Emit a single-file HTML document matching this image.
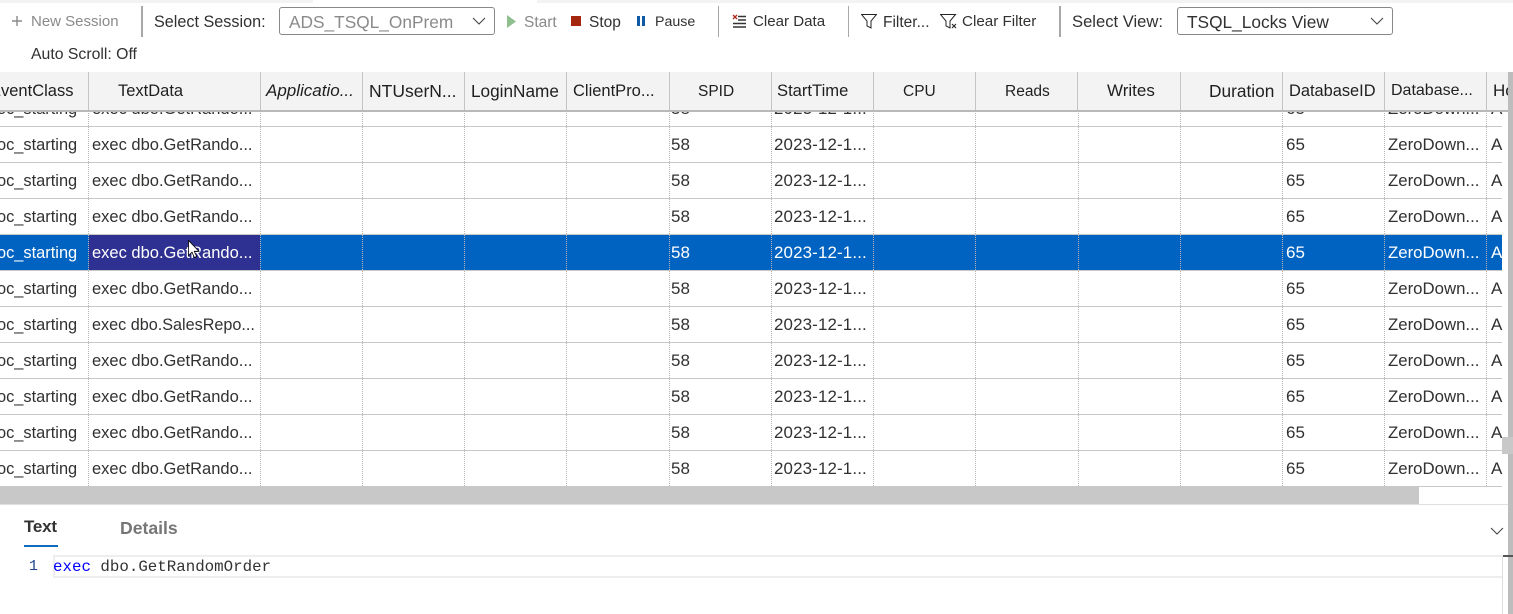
<!DOCTYPE html>
<html><head><meta charset="utf-8"><style>
html,body{margin:0;padding:0;background:#fff}
body{position:relative;width:1513px;height:614px;overflow:hidden;font-family:"Liberation Sans",sans-serif;font-size:15.5px;color:#323130}
.t,.r span,.h span{position:absolute;white-space:nowrap}
.t{line-height:20px}
.b{position:absolute;background:#a8a8a8;width:2px;top:6px;height:31px}
.g{color:#8a8a8a}
.dd{position:absolute;top:7px;height:28px;border:1px solid #8a8886;border-radius:3px;box-sizing:border-box;font-size:17.3px;line-height:28px;padding-left:9px}
.dd svg{position:absolute;right:7px;top:9px}
.h{position:absolute;left:0;top:72px;width:1508px;height:38px;background:#f3f3f3}
.h span{top:9px;line-height:20px;color:#1f1f1f;font-size:16.5px}
.h .n{top:10px;font-size:15.5px}
.hs{position:absolute;top:72px;width:1px;height:38px;background:#c4c4c4}
.cl{position:absolute;top:111px;height:375px;width:0;border-left:1px dotted #b5b5b5}
.r{position:absolute;left:0;width:1502px;height:36px;border-bottom:1px solid #c8c8c8;box-sizing:border-box}
.r span{top:8px;line-height:20px;color:#323130;font-size:16.5px}
.r .a{left:-3px;font-size:16.4px}.r .b1{left:92px;font-size:16.5px}.r .c{left:671px;font-size:17px}.r .d{left:774px;font-size:16.9px;letter-spacing:.15px}.r .e{left:1286px;font-size:17px}.r .f{left:1388px;font-size:16.8px}.r .k{left:1491px;font-size:17px}
.r .s{font-size:16.2px}
.sel{background:#0063c1;border-bottom-color:#c8c8c8}
.r.sel span{color:#fff}
.hi{position:absolute;left:89px;top:0;width:171px;height:35px;background:#2e3192}
</style></head><body>
<div style="position:absolute;left:0;top:0;width:313px;height:3px;background:#f3f3f3"></div>
<div style="position:absolute;left:537px;top:0;width:976px;height:3px;background:#f3f3f3"></div>

<svg style="position:absolute;left:11px;top:15px" width="12" height="12"><path d="M6 1v10M1 6h10" stroke="#8a8a8a" stroke-width="1.4"/></svg>
<div class="t g" style="left:31px;top:12px;font-size:15px">New Session</div>
<div class="b" style="left:141px"></div>
<div class="t" style="left:154px;top:12px;font-size:16.2px">Select Session:</div>
<div class="dd g" style="left:279px;width:216px">ADS_TSQL_OnPrem<svg width="16" height="9"><path d="M2 1l6 6 6-6" fill="none" stroke="#444" stroke-width="1.1"/></svg></div>
<svg style="position:absolute;left:507px;top:15px" width="10" height="13"><path d="M0 0l9 6.5L0 13z" fill="#8fbf8f"/></svg>
<div class="t g" style="left:524px;top:13px">Start</div>
<div style="position:absolute;left:571px;top:16px;width:10px;height:10px;background:#a4260f"></div>
<div class="t" style="left:589px;top:13px">Stop</div>
<div style="position:absolute;left:637px;top:16px;width:3px;height:10px;background:#0f5ba8"></div>
<div style="position:absolute;left:642px;top:16px;width:3px;height:10px;background:#0f5ba8"></div>
<div class="t" style="left:655px;top:12px;font-size:14.2px">Pause</div>
<div class="b" style="left:718px;width:1px"></div>
<svg style="position:absolute;left:732px;top:14px" width="15" height="15"><path d="M1 1l4 4M5 1L1 5" stroke="#b02a1a" stroke-width="1.3"/><path d="M6 2.500h8M6 6h8M1 9.500h13M1 13h13" stroke="#333" stroke-width="1.5"/></svg>
<div class="t" style="left:753px;top:12px;font-size:15.1px">Clear Data</div>
<div class="b" style="left:848px;width:1px"></div>
<svg style="position:absolute;left:861px;top:14px" width="16" height="15"><path d="M.5.500h15L10 7v7l-4-2V7z" fill="none" stroke="#222" stroke-width="1"/></svg>
<div class="t" style="left:883px;top:13px">Filter...</div>
<svg style="position:absolute;left:940px;top:14px" width="18" height="15"><path d="M.5.500h15L10 7v7l-4-2V7z" fill="none" stroke="#222" stroke-width="1"/><path d="M12 10l4 4M16 10l-4 4" stroke="#222" stroke-width="1.1"/></svg>
<div class="t" style="left:962px;top:12px;font-size:15.2px">Clear Filter</div>
<div class="b" style="left:1059px"></div>
<div class="t" style="left:1072px;top:12px;font-size:16.6px">Select View:</div>
<div class="dd" style="left:1177px;width:216px">TSQL_Locks View<svg width="16" height="9"><path d="M2 1l6 6 6-6" fill="none" stroke="#444" stroke-width="1.1"/></svg></div>
<div class="t" style="left:31px;top:45px;font-size:15.8px">Auto Scroll: Off</div>

<div class="r" style="top:91px"><span class="a">oc_starting</span><span class="b1">exec dbo.GetRando...</span><span class="c">58</span><span class="d">2023-12-1...</span><span class="e">65</span><span class="f">ZeroDown...</span><span class="k">A</span></div>
<div class="r" style="top:127px"><span class="a">oc_starting</span><span class="b1">exec dbo.GetRando...</span><span class="c">58</span><span class="d">2023-12-1...</span><span class="e">65</span><span class="f">ZeroDown...</span><span class="k">A</span></div>
<div class="r" style="top:163px"><span class="a">oc_starting</span><span class="b1">exec dbo.GetRando...</span><span class="c">58</span><span class="d">2023-12-1...</span><span class="e">65</span><span class="f">ZeroDown...</span><span class="k">A</span></div>
<div class="r" style="top:199px"><span class="a">oc_starting</span><span class="b1">exec dbo.GetRando...</span><span class="c">58</span><span class="d">2023-12-1...</span><span class="e">65</span><span class="f">ZeroDown...</span><span class="k">A</span></div>
<div class="r sel" style="top:235px"><div class="hi"></div><span class="a">oc_starting</span><span class="b1">exec dbo.GetRando...</span><span class="c">58</span><span class="d">2023-12-1...</span><span class="e">65</span><span class="f">ZeroDown...</span><span class="k">A</span></div>
<div class="r" style="top:271px"><span class="a">oc_starting</span><span class="b1">exec dbo.GetRando...</span><span class="c">58</span><span class="d">2023-12-1...</span><span class="e">65</span><span class="f">ZeroDown...</span><span class="k">A</span></div>
<div class="r" style="top:307px"><span class="a">oc_starting</span><span class="b1 s">exec dbo.SalesRepo...</span><span class="c">58</span><span class="d">2023-12-1...</span><span class="e">65</span><span class="f">ZeroDown...</span><span class="k">A</span></div>
<div class="r" style="top:343px"><span class="a">oc_starting</span><span class="b1">exec dbo.GetRando...</span><span class="c">58</span><span class="d">2023-12-1...</span><span class="e">65</span><span class="f">ZeroDown...</span><span class="k">A</span></div>
<div class="r" style="top:379px"><span class="a">oc_starting</span><span class="b1">exec dbo.GetRando...</span><span class="c">58</span><span class="d">2023-12-1...</span><span class="e">65</span><span class="f">ZeroDown...</span><span class="k">A</span></div>
<div class="r" style="top:415px"><span class="a">oc_starting</span><span class="b1">exec dbo.GetRando...</span><span class="c">58</span><span class="d">2023-12-1...</span><span class="e">65</span><span class="f">ZeroDown...</span><span class="k">A</span></div>
<div class="r" style="top:451px"><span class="a">oc_starting</span><span class="b1">exec dbo.GetRando...</span><span class="c">58</span><span class="d">2023-12-1...</span><span class="e">65</span><span class="f">ZeroDown...</span><span class="k">A</span></div>

<div class="cl" style="left:88px"></div><div class="cl" style="left:260px"></div><div class="cl" style="left:362px"></div><div class="cl" style="left:464px"></div><div class="cl" style="left:566px"></div><div class="cl" style="left:669px"></div><div class="cl" style="left:771px"></div><div class="cl" style="left:873px"></div><div class="cl" style="left:975px"></div><div class="cl" style="left:1078px"></div><div class="cl" style="left:1180px"></div><div class="cl" style="left:1282px"></div><div class="cl" style="left:1384px"></div><div class="cl" style="left:1486px"></div>

<div class="h"><span style="left:-10px">EventClass</span><span style="left:118px">TextData</span><span style="left:266px;font-style:italic;font-size:17px">Applicatio...</span><span style="left:369px;font-size:17.5px">NTUserN...</span><span style="left:471px;font-size:17.2px">LoginName</span><span style="left:573px">ClientPro...</span><span class="n" style="left:698px">SPID</span><span style="left:777px;font-size:16.6px">StartTime</span><span class="n" style="left:903px">CPU</span><span class="n" style="left:1005px">Reads</span><span style="left:1107px;font-size:17px">Writes</span><span style="left:1209px;font-size:17.3px">Duration</span><span style="left:1289px;font-size:16.4px">DatabaseID</span><span style="left:1391px;font-size:16px">Database...</span><span style="left:1493px;width:15px;overflow:hidden;font-size:17px">Host</span></div>
<div class="hs" style="left:88px"></div><div class="hs" style="left:260px"></div><div class="hs" style="left:362px"></div><div class="hs" style="left:464px"></div><div class="hs" style="left:566px"></div><div class="hs" style="left:669px"></div><div class="hs" style="left:771px"></div><div class="hs" style="left:873px"></div><div class="hs" style="left:975px"></div><div class="hs" style="left:1077px"></div><div class="hs" style="left:1180px"></div><div class="hs" style="left:1282px"></div><div class="hs" style="left:1384px"></div><div class="hs" style="left:1486px"></div>
<div style="position:absolute;left:0;top:110px;width:1508px;height:2px;background:#b8b8b8"></div>

<div style="position:absolute;left:0;top:487px;width:1419px;height:17px;background:#c8c8c8"></div>
<div style="position:absolute;left:0;top:504px;width:1508px;height:1px;background:#e0e0e0"></div>
<div style="position:absolute;left:1508px;top:72px;width:5px;height:542px;background:#bdbdbd"></div>
<div style="position:absolute;left:1502px;top:437px;width:11px;height:17px;background:#c8c8c8"></div>
<div style="position:absolute;left:1503px;top:555px;width:10px;height:2px;background:#555"></div>

<div class="t" style="left:24px;top:517px;font-weight:bold;font-size:17px;color:#333;letter-spacing:-.2px">Text</div>
<div style="position:absolute;left:24px;top:545px;width:34px;height:2px;background:#0f6cbd"></div>
<div class="t" style="left:120px;top:518px;font-weight:bold;font-size:17.6px;color:#767676">Details</div>
<svg style="position:absolute;left:1490px;top:527px" width="15" height="9"><path d="M1 1l6 6 6-6" fill="none" stroke="#444" stroke-width="1.1"/></svg>

<div style="position:absolute;left:53px;top:555px;width:1450px;height:23px;border:solid #eee;border-width:2px 0 2px 2px;box-sizing:border-box"></div>
<div style="position:absolute;left:1502px;top:557px;width:1px;height:57px;background:#ddd"></div>
<div class="t" style="left:29px;top:557px;font-family:'Liberation Mono',monospace;font-size:15px;color:#1c3f8f">1</div>
<div class="t" style="left:53px;top:557px;font-family:'Liberation Mono',monospace;font-size:15.8px"><span style="color:#0000ff">exec</span> <span style="color:#333">dbo.GetRandomOrder</span></div>

<svg style="position:absolute;left:188px;top:240px" width="12" height="20"><path d="M.5.500v15l3.500-3.300 2.400 5.300 2.300-1-2.400-5.200h4.700z" fill="#fff" stroke="#000" stroke-width=".8"/></svg>
</body></html>
